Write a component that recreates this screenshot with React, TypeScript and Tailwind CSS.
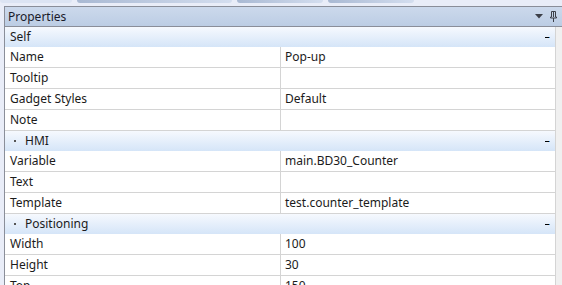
type Row =
  | { kind: "cat"; label: string; dot?: boolean }
  | { kind: "prop"; label: string; value?: string };

const rows: Row[] = [
  { kind: "cat", label: "Self" },
  { kind: "prop", label: "Name", value: "Pop-up" },
  { kind: "prop", label: "Tooltip" },
  { kind: "prop", label: "Gadget Styles", value: "Default" },
  { kind: "prop", label: "Note" },
  { kind: "cat", label: "HMI", dot: true },
  { kind: "prop", label: "Variable", value: "main.BD30_Counter" },
  { kind: "prop", label: "Text" },
  { kind: "prop", label: "Template", value: "test.counter_template" },
  { kind: "cat", label: "Positioning", dot: true },
  { kind: "prop", label: "Width", value: "100" },
  { kind: "prop", label: "Height", value: "30" },
  { kind: "prop", label: "Top", value: "150" },
];

function PinIcon() {
  return (
    <svg width="7" height="11" viewBox="0 0 7 11" aria-hidden="true">
      <path d="M1.5 0.5h4v5.5h1v1h-6v-1h1z" fill="none" stroke="#3c3f48" strokeWidth="1" />
      <rect x="3" y="1" width="1" height="5" fill="#3c3f48" />
      <rect x="3" y="7" width="1" height="4" fill="#3c3f48" />
    </svg>
  );
}

function MenuArrow() {
  return (
    <svg width="8" height="5" viewBox="0 0 8 5" aria-hidden="true">
      <path d="M0 0h8L4 4.5z" fill="#3c3f48" />
    </svg>
  );
}

function CollapseMark() {
  return <div className="h-[1px] w-[4px] bg-black shadow-[1px_0_0_#3b8fd6]" />;
}

function CategoryRow({ label, dot }: { label: string; dot?: boolean }) {
  return (
    <div className="flex h-[20px] shrink-0 items-center bg-gradient-to-b from-[#f6f9fe] to-[#d5e5f8] pr-[6px] pl-[5px]">
      {dot ? (
        <>
          <span className="flex w-[15px] items-center pl-[4px]">
            <span className="h-[2px] w-[2px] bg-[#555]" />
          </span>
          <span>{label}</span>
        </>
      ) : (
        <span>{label}</span>
      )}
      <div className="ml-auto">
        <CollapseMark />
      </div>
    </div>
  );
}

function PropRow({ label, value }: { label: string; value?: string }) {
  return (
    <div className="flex h-[21px] shrink-0 border-b border-[#d4d4d4] bg-white">
      <div className="flex w-[276px] items-center border-r border-[#d4d4d4] pl-[5px]">
        {label}
      </div>
      <div className="flex flex-1 items-center pl-[4px]">{value}</div>
    </div>
  );
}

export default function App() {
  return (
    <div
      className="flex h-[285px] w-[562px] flex-col overflow-hidden bg-[#e9edf8] text-[12px] text-[#1b1b1b]"
      style={{ fontFamily: '"Noto Sans", "Open Sans", sans-serif' }}
    >
      {/* document tab strip */}
      <div className="flex h-[6px] shrink-0 items-start gap-[5px]">
        <div className="h-[3px] w-[72px] rounded-b-[3px] bg-[#dce4f3]" />
        <div className="h-[3px] w-[155px] rounded-b-[3px] bg-gradient-to-r from-[#a9b9d3] to-[#d4deef]" />
        <div className="h-[3px] w-[86px] rounded-b-[3px] bg-gradient-to-r from-[#a9b9d3] to-[#d4deef]" />
        <div className="h-[3px] w-[86px] rounded-b-[3px] bg-gradient-to-r from-[#a9b9d3] to-[#d4deef]" />
      </div>

      <div className="ml-[4px] flex shrink-0 flex-col border-t border-l border-[#8a8e99]">
        {/* title bar */}
        <div className="flex h-[20px] shrink-0 items-center border-b border-[#8a8e99] bg-gradient-to-b from-[#ccd9ec] to-[#bccde4] pr-[5px] pl-[3px]">
          <span className="text-[#1a1a2a]">Properties</span>
          <div className="ml-auto flex items-center gap-[7px]">
            <MenuArrow />
            <PinIcon />
          </div>
        </div>

        <div className="flex shrink-0 bg-[#f0f0f0]">
          <div className="flex w-[551px] flex-col border-r border-[#d4d4d4] bg-white">
            {rows.map((r, i) =>
              r.kind === "cat" ? (
                <CategoryRow key={i} label={r.label} dot={r.dot} />
              ) : (
                <PropRow key={i} label={r.label} value={r.value} />
              )
            )}
          </div>
        </div>
      </div>
    </div>
  );
}
